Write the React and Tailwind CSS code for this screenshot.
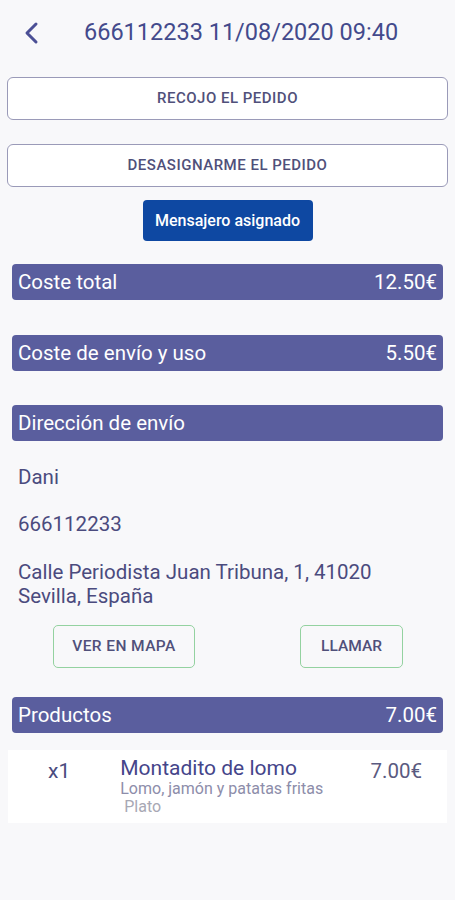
import React from 'react';

const font = { fontFamily: 'Roboto, "Noto Sans", sans-serif' };

const Bar = ({ label, value, className = '' }) => (
  <div className={`mx-3 h-9 flex items-center justify-between px-[6px] rounded-[4px] bg-[#5a5e9e] text-white text-[20.5px] ${className}`}>
    <span>{label}</span>
    {value && <span>{value}</span>}
  </div>
);

export default function App() {
  return (
    <div className="w-[455px] h-[900px] bg-[#f8f8fa] text-[#45457a] flex flex-col" style={font}>
      {/* header */}
      <div className="h-[66px] flex items-center pl-[22px]">
        <svg width="20" height="24" viewBox="0 0 20 24" fill="none" stroke="#4b4f95" strokeWidth="3" strokeLinecap="round" strokeLinejoin="round">
          <path d="M14 3 L5 12 L14 21" />
        </svg>
        <h1 className="ml-[42px] text-[23.5px] text-[#434a8c]">666112233 11/08/2020 09:40</h1>
      </div>

      {/* actions */}
      <div className="px-[7px] pt-[11px] flex flex-col">
        <button className="h-[43px] w-full rounded-[6px] border border-[#9a9ab8] bg-white text-[15px] font-medium text-[#50507a] tracking-[0.5px]">RECOJO EL PEDIDO</button>
        <button className="mt-[24px] h-[43px] w-full rounded-[6px] border border-[#9a9ab8] bg-white text-[15px] font-medium text-[#50507a] tracking-[0.5px]">DESASIGNARME EL PEDIDO</button>
        <button className="mt-[13px] self-center h-[41px] w-[170px] rounded-[4px] bg-[#0e48a2] text-white text-[16px] font-medium">Mensajero asignado</button>
      </div>

      <Bar label="Coste total" value="12.50€" className="mt-[23px]" />
      <Bar label="Coste de envío y uso" value="5.50€" className="mt-[35px]" />
      <Bar label="Dirección de envío" className="mt-[34px]" />

      {/* address */}
      <div className="px-[18px] text-[20.5px] text-[#4b4b7e]">
        <p className="mt-[24px] leading-[24px]">Dani</p>
        <p className="mt-[23px] leading-[24px]">666112233</p>
        <p className="mt-[24px] leading-[24px]">Calle Periodista Juan Tribuna, 1, 41020<br />Sevilla, España</p>
      </div>
      <div className="mt-[17px] flex">
        <button className="ml-[53px] h-[43px] w-[142px] rounded-[5px] border border-[#94d2a0] text-[15.5px] font-medium text-[#50507a] tracking-[0.4px]">VER EN MAPA</button>
        <button className="ml-[105px] h-[43px] w-[103px] rounded-[5px] border border-[#94d2a0] text-[15.5px] font-medium text-[#50507a]">LLAMAR</button>
      </div>

      <Bar label="Productos" value="7.00€" className="mt-[29px]" />

      {/* product */}
      <div className="mx-[8px] mt-[17px] h-[73px] bg-white flex">
        <span className="ml-[40px] mt-[6px] text-[21px] text-[#4b4b7e]">x1</span>
        <div className="ml-[50px] mt-[6px] flex-1 flex flex-col">
          <span className="text-[21px] leading-[24px] text-[#45458a]">Montadito de lomo</span>
          <span className="text-[16px] leading-[18px] text-[#8d8daa]">Lomo, jamón y patatas fritas</span>
          <span className="ml-[4px] text-[16px] leading-[18px] text-[#a8a8b4]">Plato</span>
        </div>
        <span className="mr-[25px] mt-[6px] text-[20.5px] text-[#5a5a80]">7.00€</span>
      </div>
    </div>
  );
}
